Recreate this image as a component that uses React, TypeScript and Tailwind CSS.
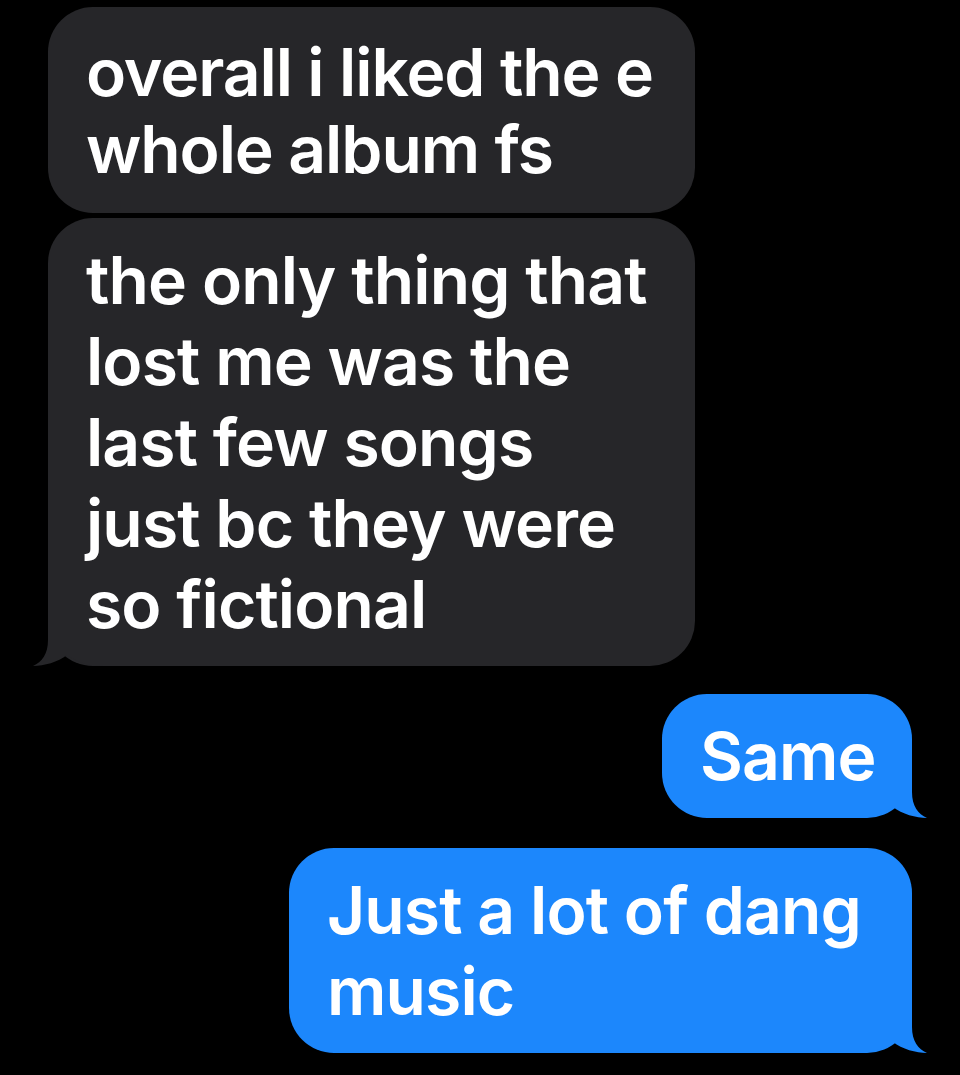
const Tail = ({ side, color }: { side: "left" | "right"; color: string }) => {
  return (
    <svg
      width="80"
      height="50"
      viewBox="0 0 80 50"
      className={`absolute bottom-0 ${side === "left" ? "left-[-16px]" : "right-[-16px] -scale-x-100"}`}
    >
      <path
        d="M16 0 L16 24 C16 38 10 46 1 50 C12 50 26 46 35 39 C46 47 58 50 72 50 L72 0 Z"
        fill={color}
      />
    </svg>
  );
};

type BubbleProps = {
  lines: string[];
  side: "left" | "right";
  width: string;
  tail?: boolean;
  tight?: boolean;
};

const Bubble = ({ lines, side, width, tail, tight }: BubbleProps) => {
  const color = side === "left" ? "#262629" : "#1c87fc";
  return (
    <div
      className={`relative ${width} rounded-[45px] px-[38px] ${
        tight ? "pt-[27px] pb-[25px]" : "pt-[22px] pb-[21px]"
      } ${side === "left" ? "self-start bg-[#262629]" : "self-end bg-[#1c87fc]"}`}
    >
      <p
        className={`relative z-10 whitespace-nowrap text-[66px] font-semibold text-white ${
          tight ? "leading-[77px] tracking-[-1.1px]" : "leading-[81px] tracking-[-0.9px]"
        }`}
      >
        {lines.map((line, i) => (
          <span key={i} className="block">
            {line}
          </span>
        ))}
      </p>
      {tail && <Tail side={side} color={color} />}
    </div>
  );
};

export default function App() {
  return (
    <div
      className="min-h-[1075px] w-[960px] bg-black px-[48px] pt-[7px] flex flex-col"
      style={{ fontFamily: "Inter, 'Noto Sans', sans-serif" }}
    >
      <Bubble side="left" width="w-[647px]" tight lines={["overall i liked the e", "whole album fs"]} />
      <div className="h-[5px]" />
      <Bubble
        side="left"
        width="w-[647px]"
        tail
        lines={[
          "the only thing that",
          "lost me was the",
          "last few songs",
          "just bc they were",
          "so fictional",
        ]}
      />
      <div className="h-[28px]" />
      <Bubble side="right" width="w-[250px]" tail lines={["Same"]} />
      <div className="h-[30px]" />
      <Bubble side="right" width="w-[623px]" tail lines={["Just a lot of dang", "music"]} />
    </div>
  );
}
